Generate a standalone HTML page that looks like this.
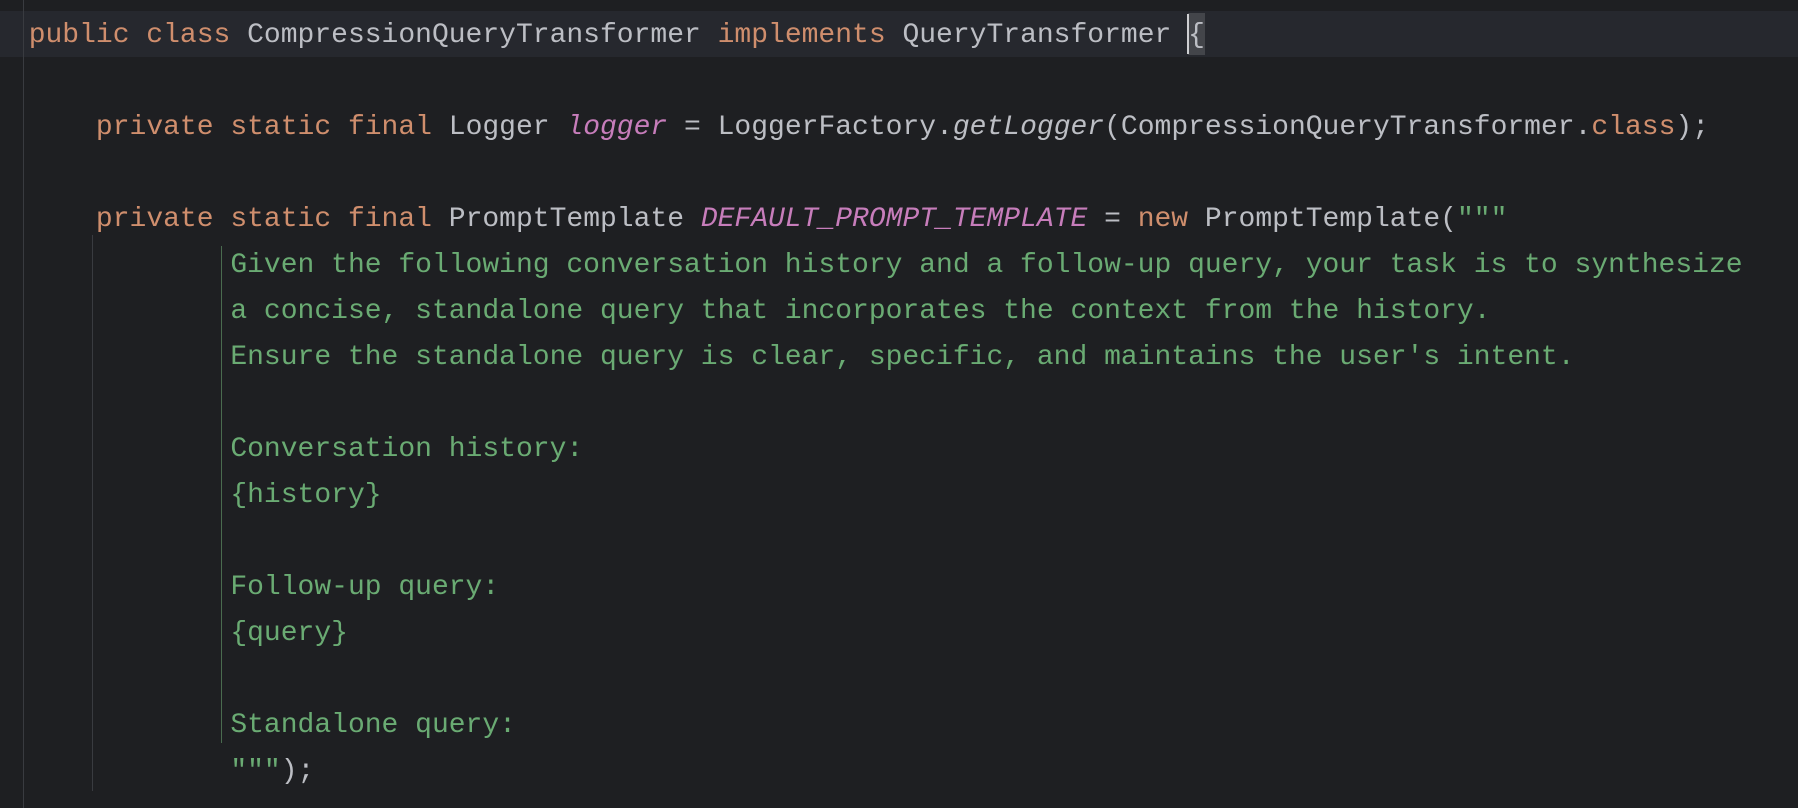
<!DOCTYPE html>
<html><head><meta charset="utf-8"><style>
html,body{margin:0;padding:0;background:#1e1f22;width:1798px;height:808px;overflow:hidden}
.l{position:absolute;left:28.7px;height:46px;line-height:46px;font-family:"Liberation Mono",monospace;font-size:28px;color:#bcbec4;white-space:pre}
.k{color:#cf8e6d}.p{color:#c77dbb;font-style:italic}.i{font-style:italic}.g{color:#6aab73}
.v{position:absolute;width:1px;background:#393b40}
</style></head><body>
<div style="position:absolute;left:0;top:11px;width:1798px;height:46px;background:#26282e"></div>
<div class="v" style="left:23px;top:0;height:808px"></div>
<div class="v" style="left:92px;top:235px;height:556px"></div>
<div class="v" style="left:221px;top:246px;height:497px;background:#4a6b4f"></div>
<div style="position:absolute;left:1188px;top:13px;width:17px;height:42px;background:#43454a"></div>
<div style="position:absolute;left:1187px;top:14px;width:2px;height:40px;background:#cecfd2"></div>
<div class="l" style="top:13px"><span class="k">public class </span>CompressionQueryTransformer <span class="k">implements </span>QueryTransformer {</div>
<div class="l" style="top:105px">    <span class="k">private static final </span>Logger <span class="p">logger</span> = LoggerFactory.<span class="i">getLogger</span>(CompressionQueryTransformer.<span class="k">class</span>);</div>
<div class="l" style="top:197px">    <span class="k">private static final </span>PromptTemplate <span class="p">DEFAULT_PROMPT_TEMPLATE</span> = <span class="k">new </span>PromptTemplate(<span class="g">"""</span></div>
<div class="l g" style="top:243px">            Given the following conversation history and a follow-up query, your task is to synthesize</div>
<div class="l g" style="top:289px">            a concise, standalone query that incorporates the context from the history.</div>
<div class="l g" style="top:335px">            Ensure the standalone query is clear, specific, and maintains the user's intent.</div>
<div class="l g" style="top:427px">            Conversation history:</div>
<div class="l g" style="top:473px">            {history}</div>
<div class="l g" style="top:565px">            Follow-up query:</div>
<div class="l g" style="top:611px">            {query}</div>
<div class="l g" style="top:703px">            Standalone query:</div>
<div class="l" style="top:749px">            <span class="g">"""</span>);</div>
</body></html>
